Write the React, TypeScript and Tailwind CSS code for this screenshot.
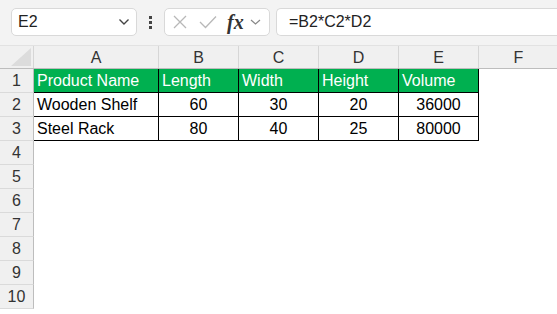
import React from "react";

const font = { fontFamily: '"Liberation Sans", Arial, sans-serif' };

const cols = ["A", "B", "C", "D", "E", "F"];
const widths = ["w-[125px]", "w-[80px]", "w-[80px]", "w-[80px]", "w-[80px]", "w-[80px]"];

const data: (string | number)[][] = [
  ["Product Name", "Length", "Width", "Height", "Volume"],
  ["Wooden Shelf", 60, 30, 20, 36000],
  ["Steel Rack", 80, 40, 25, 80000],
];

export default function App() {
  const rows = Array.from({ length: 10 }, (_, i) => i + 1);
  return (
    <div className="w-[557px] h-[314px] overflow-hidden bg-white text-black" style={font}>
      {/* toolbar */}
      <div className="h-[45px] bg-[#f3f3f3] flex items-start pt-[8px] pl-[11px] gap-0">
        <div className="w-[126px] h-[28px] bg-white border border-[#d9d9d9] rounded-[5px] flex items-center pl-[6px] pr-[6px] justify-between">
          <span className="text-[16px] text-[#222]">E2</span>
          <svg width="12" height="8" viewBox="0 0 12 8"><path d="M1.5 1.5 L6 6 L10.5 1.5" fill="none" stroke="#444" strokeWidth="1.4" /></svg>
        </div>
        <div className="w-[27px] h-[28px] flex flex-col items-center justify-center gap-[2px]">
          <div className="w-[3px] h-[3px] bg-[#444]" />
          <div className="w-[3px] h-[3px] bg-[#444]" />
          <div className="w-[3px] h-[3px] bg-[#444]" />
        </div>
        <div className="w-[106px] h-[28px] bg-white border border-[#d9d9d9] rounded-[5px] flex items-center pl-[7px] gap-0">
          <svg width="16" height="16" viewBox="0 0 16 16" className="mr-[11px]"><path d="M2 2 L14 14 M14 2 L2 14" stroke="#b8b8b8" strokeWidth="1.3" fill="none" /></svg>
          <svg width="18" height="14" viewBox="0 0 18 14" className="mr-[10px]"><path d="M1 7 L6.5 12.5 L17 1.5" stroke="#b8b8b8" strokeWidth="1.3" fill="none" /></svg>
          <span className="text-[20px] italic text-[#333] leading-none" style={{ fontFamily: '"Liberation Serif", serif' }}>
            <span className="font-semibold">fx</span>
          </span>
          <svg width="11" height="8" viewBox="0 0 11 8" className="ml-[6px]"><path d="M1 2 L5.5 6 L10 2" fill="none" stroke="#888" strokeWidth="1.2" /></svg>
        </div>
        <div className="ml-[6px] flex-1 h-[28px] bg-white border border-[#d9d9d9] border-r-0 rounded-l-[5px] flex items-center pl-[12px]">
          <span className="text-[16px] text-[#222]">=B2*C2*D2</span>
        </div>
      </div>

      {/* column headers */}
      <div className="flex h-[24px] bg-[#f0f0f0] border-b border-[#bdbdbd] border-t border-t-[#e2e2e2]">
        <div className="w-[34px] shrink-0 h-full relative border-r border-[#d6d6d6]">
          <svg width="20" height="18" viewBox="0 0 20 18" className="absolute right-[2px] bottom-[2px]"><path d="M20 0 L20 18 L0 18 Z" fill="#dcdcdc" /></svg>
        </div>
        {cols.map((c, i) => (
          <div key={c} className={`${widths[i]} shrink-0 h-full flex items-center justify-center pt-[1px] text-[16px] text-[#333] border-r border-[#d6d6d6]`}>
            {c}
          </div>
        ))}
      </div>

      {/* rows */}
      {rows.map((r) => (
        <div key={r} className="flex h-[24px]">
          <div className="w-[34px] shrink-0 h-full bg-[#f0f0f0] border-r border-[#bdbdbd] border-b border-b-[#dadada] flex items-center justify-center text-[16px] text-[#333]">
            {r}
          </div>
          {cols.map((c, ci) => {
            const inTable = r <= 3 && ci < 5;
            const val = inTable ? data[r - 1][ci] : "";
            const header = r === 1 && inTable;
            const isNum = typeof val === "number";
            return (
              <div
                key={c}
                className={`${widths[ci]} shrink-0 h-full flex items-center text-[16px] ${
                  inTable ? "border-r border-b border-black" : ""
                } ${header ? "bg-[#00b050] text-white" : ""} ${isNum ? "justify-center" : "pl-[3px]"}`}
              >
                {val}
              </div>
            );
          })}
        </div>
      ))}
    </div>
  );
}
